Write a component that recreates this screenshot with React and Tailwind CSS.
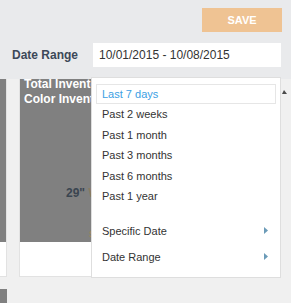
import React from "react";

const options = ["Last 7 days", "Past 2 weeks", "Past 1 month", "Past 3 months", "Past 6 months", "Past 1 year"];

const Arrow = () => (
  <svg width="4" height="7" viewBox="0 0 4 7" className="shrink-0">
    <polygon points="0,0 4,3.5 0,7" fill="#6b9bb8" />
  </svg>
);

const App = () => {
  return (
    <div className="relative w-[291px] h-[303px] overflow-hidden bg-[#f0f0f0] font-['Liberation_Sans',Arial,sans-serif]">
      <header className="relative z-10 h-[79px] bg-[#e9eaec]">
        <div className="flex justify-end pt-2 pr-[9px]">
          <button className="w-[80px] h-[24px] bg-[#efc393] text-white text-[11px] font-bold">SAVE</button>
        </div>
        <div className="flex items-center mt-[11px]">
          <span className="w-[93px] pl-3 text-[12px] font-bold text-[#3c4858]">Date Range</span>
          <div className="w-[188px] h-[24px] bg-white flex items-center pl-[6px] text-[12px] text-[#333]">
            10/01/2015 - 10/08/2015
          </div>
        </div>
      </header>

      <div className="h-[224px] overflow-hidden">
        <div className="-mt-[9px] -ml-[243px] flex flex-col gap-3">
          <div className="flex gap-3">
            <div className="w-[250px] h-[207px] flex flex-col border border-[#e2e2e2] bg-white">
              <div className="h-[171px] bg-[#808080]" />
            </div>
            <div className="w-[250px] h-[207px] flex flex-col border border-[#e2e2e2] bg-white">
              <div className="h-[171px] bg-[#808080] pt-[6px] pl-[4px]">
                <p className="text-[12px] leading-[15px] font-bold text-white">Total Inventory</p>
                <p className="text-[12px] leading-[15px] font-bold text-white">Color Inventory</p>
                <p className="mt-[79px] pl-[42px] text-[12px] leading-[15px] font-bold text-[#3a4550]">
                  29" <span className="text-[#8a7a60]">W</span>
                </p>
                <p className="mt-[28px] pl-[65px] text-[9px] leading-[10px] text-[#a58a5c]">$ 1</p>
              </div>
            </div>
          </div>
          <div className="flex gap-3">
            <div className="w-[250px] h-[207px] bg-[#808080]" />
          </div>
        </div>
      </div>

      <div className="absolute left-[91px] top-[77px] z-20 w-[190px] h-[201px] bg-white border border-[#dedede] pt-[6px] px-[4px]">
        {options.map((o, i) => (
          <div
            key={o}
            className={
              i === 0
                ? "h-[20px] flex items-center px-[5px] text-[11px] text-[#3ba0e3] border border-[#e6e6e6]"
                : "h-[20.6px] flex items-center px-[6px] text-[11px] text-[#333]"
            }
          >
            {o}
          </div>
        ))}
        <div className="mt-[11px] h-[26px] flex items-center justify-between pl-[6px] pr-[8px] text-[11px] text-[#333]">
          Specific Date
          <Arrow />
        </div>
        <div className="h-[26px] flex items-center justify-between pl-[6px] pr-[8px] text-[11px] text-[#333]">
          Date Range
          <Arrow />
        </div>
      </div>

      <svg width="5" height="4" viewBox="0 0 5 4" className="absolute left-[282px] top-[90px] z-20">
        <polygon points="0,4 2,0 5,4" fill="#4a4a4a" />
      </svg>
    </div>
  );
};

export default App;
